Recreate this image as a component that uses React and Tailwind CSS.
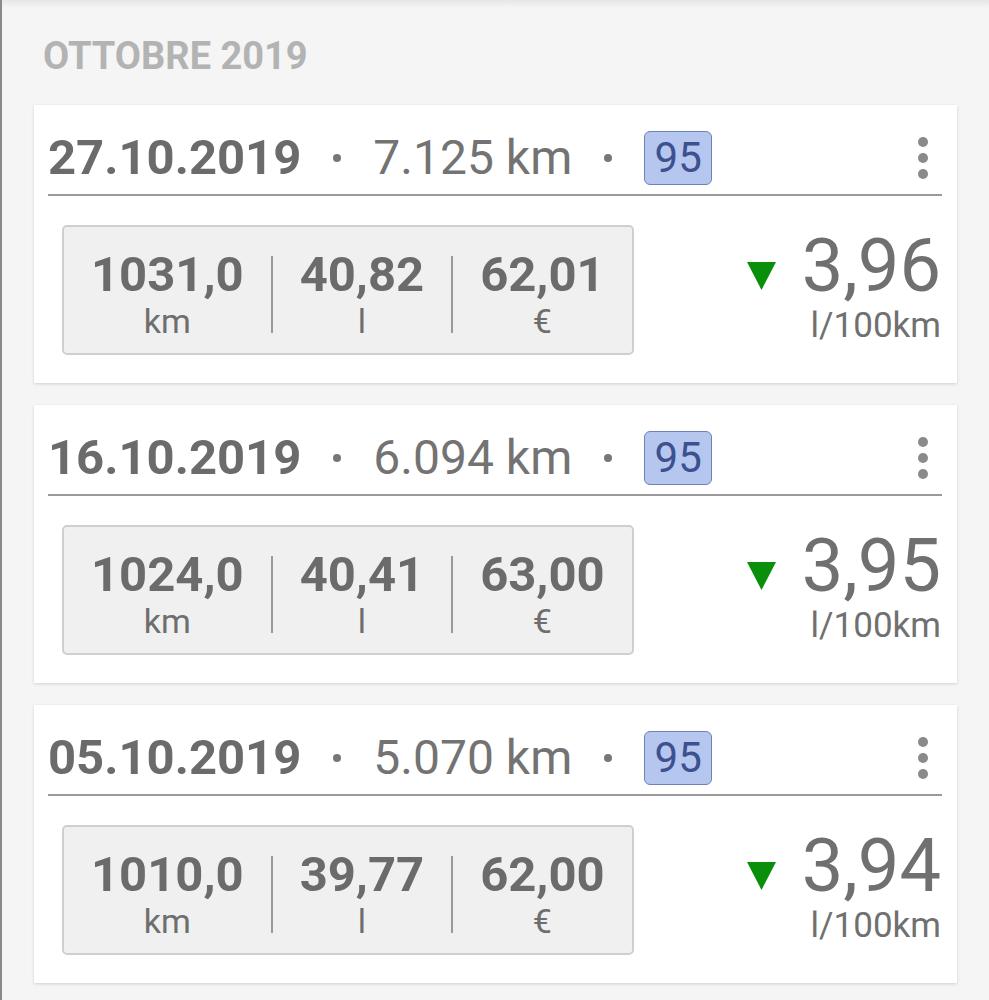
import React from "react";

const entries = [
  { date: "27.10.2019", odo: "7.125 km", fuel: "95", dist: "1031,0", litres: "40,82", cost: "62,01", avg: "3,96" },
  { date: "16.10.2019", odo: "6.094 km", fuel: "95", dist: "1024,0", litres: "40,41", cost: "63,00", avg: "3,95" },
  { date: "05.10.2019", odo: "5.070 km", fuel: "95", dist: "1010,0", litres: "39,77", cost: "62,00", avg: "3,94" },
];

const Dot = () => <span className="mx-[32px] h-[8px] w-[8px] rounded-full bg-[#777]" />;

const Stat = ({ value, unit }) => (
  <div className="flex flex-col items-center px-[27px]">
    <span className="text-[49px] font-bold leading-[50px] text-[#6b6b6b]">{value}</span>
    <span className="mt-[4px] text-[34px] leading-[34px] text-[#6e6e6e]">{unit}</span>
  </div>
);

const Sep = () => <div className="h-[77px] w-[2px] bg-[#999]" />;

const EntryCard = ({ e }) => (
  <div className="bg-white pb-[28px] pl-[14px] pr-[15px] pt-[26px] shadow-[0_1px_3px_rgba(0,0,0,0.15)]">
    <div className="box-content flex h-[54px] items-center border-b-2 border-[#9a9a9a] pb-[9px]">
      <span className="text-[49px] font-bold leading-[50px] text-[#6b6b6b]">{e.date}</span>
      <Dot />
      <span className="text-[48px] leading-[50px] text-[#737373]">{e.odo}</span>
      <Dot />
      <span className="flex h-[54px] w-[68px] items-center justify-center rounded-[6px] border border-[#6f82b8] bg-[#b5c7ee] text-[42px] leading-none text-[#3d5090]">
        {e.fuel}
      </span>
      <div className="ml-auto mr-[14px] flex flex-col gap-[6px]">
        <span className="h-[10px] w-[10px] rounded-full bg-[#8a8a8a]" />
        <span className="h-[10px] w-[10px] rounded-full bg-[#8a8a8a]" />
        <span className="h-[10px] w-[10px] rounded-full bg-[#8a8a8a]" />
      </div>
    </div>
    <div className="mt-[29px] flex items-center justify-between">
      <div className="ml-[14px] flex items-center rounded-[5px] border-2 border-[#cfcfcf] bg-[#f0f0f0] pb-[15px] pt-[23px]">
        <Stat value={e.dist} unit="km" />
        <Sep />
        <Stat value={e.litres} unit="l" />
        <Sep />
        <Stat value={e.cost} unit="€" />
      </div>
      <div className="-mt-[8px] flex flex-col items-end pr-[1px]">
        <div className="flex items-end">
          <svg width="29" height="28" viewBox="0 0 29 28" className="mb-[13px] mr-[26px]">
            <polygon points="0,0 29,0 14.5,28" fill="#0a8f0a" />
          </svg>
          <span className="text-[74px] leading-[74px] text-[#707070]">{e.avg}</span>
        </div>
        <span className="mt-[5px] text-[35px] leading-[35px] text-[#707070]">l/100km</span>
      </div>
    </div>
  </div>
);

export default function App() {
  return (
    <div
      className="min-h-[1000px] border-l-2 border-[#8a8a8a] bg-[#f5f5f5] pl-[32px] pr-[32px]"
      style={{ fontFamily: "Roboto, 'Liberation Sans', sans-serif" }}
    >
      <div className="-ml-[32px] -mr-[32px] h-[8px] bg-gradient-to-b from-[#e6e6e6] to-[#f5f5f5]" />
      <h2 className="ml-[9px] mt-[26px] text-[38px] font-bold leading-[44px] text-[#b3b3b3]">OTTOBRE 2019</h2>
      <div className="mt-[27px] flex flex-col gap-[22px]">
        {entries.map((e) => (
          <EntryCard key={e.date} e={e} />
        ))}
      </div>
    </div>
  );
}
